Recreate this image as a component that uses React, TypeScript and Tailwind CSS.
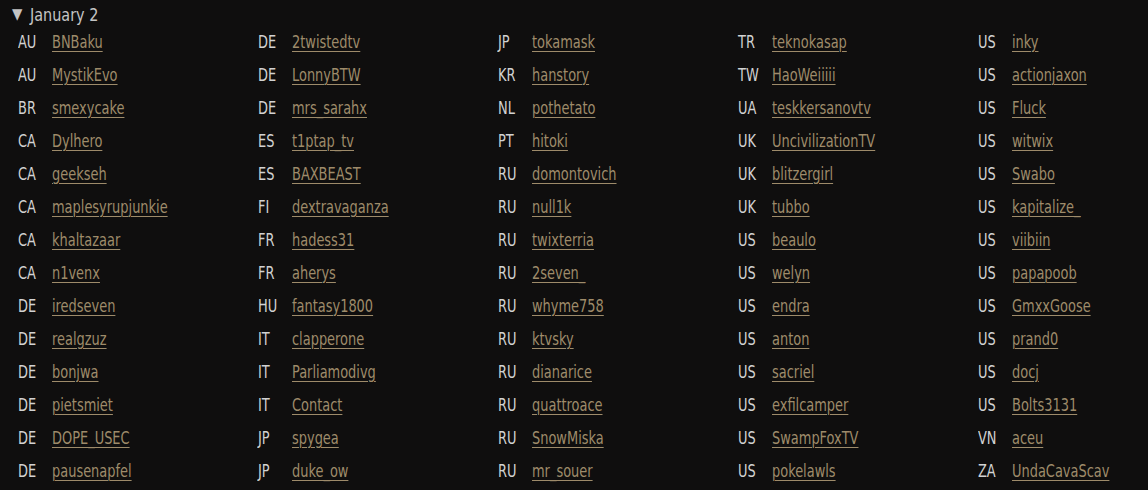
const entries: [string, string][] = [
  ["AU", "BNBaku"], ["AU", "MystikEvo"], ["BR", "smexycake"], ["CA", "Dylhero"], ["CA", "geekseh"],
  ["CA", "maplesyrupjunkie"], ["CA", "khaltazaar"], ["CA", "n1venx"], ["DE", "iredseven"], ["DE", "realgzuz"],
  ["DE", "bonjwa"], ["DE", "pietsmiet"], ["DE", "DOPE_USEC"], ["DE", "pausenapfel"],
  ["DE", "2twistedtv"], ["DE", "LonnyBTW"], ["DE", "mrs_sarahx"], ["ES", "t1ptap_tv"], ["ES", "BAXBEAST"],
  ["FI", "dextravaganza"], ["FR", "hadess31"], ["FR", "aherys"], ["HU", "fantasy1800"], ["IT", "clapperone"],
  ["IT", "Parliamodivg"], ["IT", "Contact"], ["JP", "spygea"], ["JP", "duke_ow"],
  ["JP", "tokamask"], ["KR", "hanstory"], ["NL", "pothetato"], ["PT", "hitoki"], ["RU", "domontovich"],
  ["RU", "null1k"], ["RU", "twixterria"], ["RU", "2seven_"], ["RU", "whyme758"], ["RU", "ktvsky"],
  ["RU", "dianarice"], ["RU", "quattroace"], ["RU", "SnowMiska"], ["RU", "mr_souer"],
  ["TR", "teknokasap"], ["TW", "HaoWeiiiii"], ["UA", "teskkersanovtv"], ["UK", "UncivilizationTV"], ["UK", "blitzergirl"],
  ["UK", "tubbo"], ["US", "beaulo"], ["US", "welyn"], ["US", "endra"], ["US", "anton"],
  ["US", "sacriel"], ["US", "exfilcamper"], ["US", "SwampFoxTV"], ["US", "pokelawls"],
  ["US", "inky"], ["US", "actionjaxon"], ["US", "Fluck"], ["US", "witwix"], ["US", "Swabo"],
  ["US", "kapitalize_"], ["US", "viibiin"], ["US", "papapoob"], ["US", "GmxxGoose"], ["US", "prand0"],
  ["US", "docj"], ["US", "Bolts3131"], ["VN", "aceu"], ["ZA", "UndaCavaScav"],
];

export default function App() {
  return (
    <div className="w-[1148px] h-[490px] overflow-hidden bg-[#0f0e0e] font-['DejaVu_Sans_Condensed','DejaVu_Sans',sans-serif]">
      <div className="flex items-center h-[28px] pl-[12px] text-[#c4c4c4]">
        <span className="text-[15px] mr-[8px]">▼</span>
        <span className="text-[18px] origin-left scale-x-[0.89]">January 2</span>
      </div>
      <div className="grid grid-cols-[repeat(5,240px)] grid-rows-[repeat(14,33px)] grid-flow-col pl-[18px] -mt-[3px]">
        {entries.map(([code, name], i) => (
          <div key={i} className="flex items-center text-[18px] leading-none origin-left scale-x-[0.8]">
            <span className="w-[42.5px] shrink-0 text-[#d2d2d2]">{code}</span>
            <a
              href="#"
              className="text-[#9e8b6a] underline decoration-1 underline-offset-[3px]"
            >
              {name}
            </a>
          </div>
        ))}
      </div>
    </div>
  );
}
